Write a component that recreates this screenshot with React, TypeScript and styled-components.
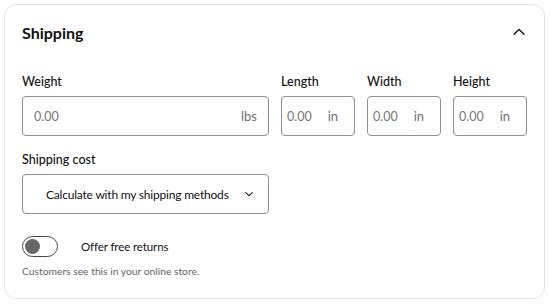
import React from "react";
import styled, { createGlobalStyle } from "styled-components";

const Global = createGlobalStyle`
  html, body { margin: 0; padding: 0; background: #ffffff; }
  body { font-family: Lato, "Noto Sans", sans-serif; color: #111111; }
  * { box-sizing: border-box; }
`;

const Page = styled.div`
  width: 550px;
  height: 304px;
  padding: 4px 5px 5px 4px;
`;

const Card = styled.section`
  width: 541px;
  height: 295px;
  border: 1px solid #e2e5e8;
  border-radius: 12px;
  padding: 0 17px 0 17px;
  display: flex;
  flex-direction: column;
`;

const Header = styled.div`
  height: 54px;
  display: flex;
  align-items: center;
  justify-content: space-between;
`;

const Title = styled.h2`
  margin: 0;
  font-size: 16px;
  font-weight: 700;
`;

const IconButton = styled.button`
  border: 0;
  background: none;
  padding: 0;
  width: 12px;
  height: 12px;
  margin-right: 2px;
  display: flex;
  align-items: center;
  justify-content: center;
  color: #111;
`;

const DimRow = styled.div`
  margin-top: 15px;
  display: grid;
  grid-template-columns: 247px repeat(3, 1fr);
  column-gap: 12px;
`;

const Field = styled.div`
  display: flex;
  flex-direction: column;
`;

const Label = styled.label`
  font-size: 12.5px;
  font-weight: 500;
  line-height: 16px;
  margin-bottom: 6px;
  color: #111;
`;

const InputBox = styled.div<{ $compact?: boolean }>`
  height: 40px;
  border: 1px solid #8f8f8f;
  border-radius: 4px;
  display: flex;
  align-items: center;
  justify-content: space-between;
  padding: ${(p) => (p.$compact ? "0 16px 0 5px" : "0 11px")};
  font-size: 12.5px;
  color: #777777;
`;

const Unit = styled.span`
  font-size: 13px;
  color: #6e6e6e;
`;

const CostSection = styled.div`
  margin-top: 16px;
  width: 247px;
  display: flex;
  flex-direction: column;
`;

const Select = styled.button`
  height: 40px;
  border: 1px solid #8f8f8f;
  border-radius: 4px;
  background: #fff;
  display: flex;
  align-items: center;
  justify-content: space-between;
  padding: 0 15px 0 23px;
  font-family: inherit;
  font-size: 12px;
  letter-spacing: -0.2px;
  color: #111;
  white-space: nowrap;
`;

const ToggleRow = styled.div`
  margin-top: 22px;
  display: flex;
  align-items: center;
  gap: 23px;
`;

const Switch = styled.div`
  width: 36px;
  height: 21px;
  border: 1.5px solid #4a4a4a;
  border-radius: 11px;
  padding: 0 0 0 2px;
  display: flex;
  align-items: center;
`;

const Knob = styled.div`
  width: 15px;
  height: 15px;
  border-radius: 50%;
  background: #666666;
`;

const ToggleLabel = styled.span`
  font-size: 11.5px;
  letter-spacing: -0.1px;
`;

const Help = styled.p`
  margin: 8px 0 0 0;
  font-size: 10.3px;
  line-height: 13px;
  color: #666;
`;

const Chevron = ({ up, size = 12 }: { up?: boolean; size?: number }) => (
  <svg width={size} height={size} viewBox="0 0 12 12" fill="none">
    <path
      d={up ? "M1 8.2 L6 3.6 L11 8.2" : "M1 3.8 L6 8.4 L11 3.8"}
      stroke="#111"
      strokeWidth={up ? 1.4 : 1.6}
      strokeLinecap="round"
      strokeLinejoin="round"
    />
  </svg>
);

const dims = ["Length", "Width", "Height"];

export default function App() {
  return (
    <Page>
      <Global />
      <Card>
        <Header>
          <Title>Shipping</Title>
          <IconButton aria-label="Collapse">
            <Chevron up />
          </IconButton>
        </Header>
        <DimRow>
          <Field>
            <Label>Weight</Label>
            <InputBox>
              <span>0.00</span>
              <Unit>lbs</Unit>
            </InputBox>
          </Field>
          {dims.map((d) => (
            <Field key={d}>
              <Label>{d}</Label>
              <InputBox $compact>
                <span>0.00</span>
                <Unit>in</Unit>
              </InputBox>
            </Field>
          ))}
        </DimRow>
        <CostSection>
          <Label>Shipping cost</Label>
          <Select>
            <span>Calculate with my shipping methods</span>
            <Chevron size={8} />
          </Select>
        </CostSection>
        <ToggleRow>
          <Switch>
            <Knob />
          </Switch>
          <ToggleLabel>Offer free returns</ToggleLabel>
        </ToggleRow>
        <Help>Customers see this in your online store.</Help>
      </Card>
    </Page>
  );
}
